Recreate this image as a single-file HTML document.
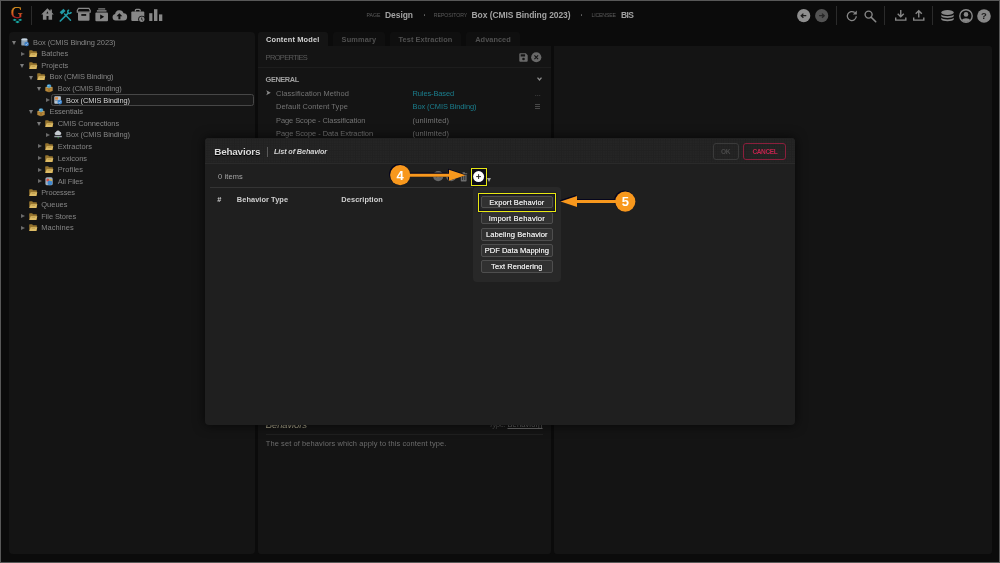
<!DOCTYPE html>
<html lang="en">
<head>
<meta charset="utf-8">
<title>Behaviors</title>
<style>
*{box-sizing:border-box;margin:0;padding:0}
html,body{width:1000px;height:563px;overflow:hidden;background:#0b0b0b}
body{font-family:"Liberation Sans",sans-serif;color:#8f8f8f;font-size:8px;position:relative}
#frame{position:absolute;left:0;top:0;width:1000px;height:563px;border:1px solid #585858;z-index:50;pointer-events:none}
.abs{position:absolute}
#root{position:absolute;left:0;top:0;width:1000px;height:563px;will-change:transform}
.panel{position:absolute;background:#141414}
#left{left:9px;top:32px;width:245.500px;height:522px;border-radius:4px}
#mid{left:258px;top:46px;width:293px;height:508px;border-radius:0 0 3px 3px}
#right{left:554.3px;top:46px;width:437.5px;height:508px;border-radius:0 3px 3px 3px}
.tab{position:absolute;top:32px;height:14px;background:#0f0f0f;border-radius:3px 3px 0 0}
.tab.on{background:#141414;height:15px}
.t{position:absolute;white-space:nowrap;line-height:12px;height:12px}
.arr{position:absolute;width:0;height:0}
.arr.d{border-left:2.4px solid transparent;border-right:2.4px solid transparent;border-top:4px solid #7c7c7c}
.arr.r{border-top:2.4px solid transparent;border-bottom:2.4px solid transparent;border-left:4px solid #6a6a6a}
svg{position:absolute;overflow:visible}
#dlg{position:absolute;left:204.5px;top:138px;width:590.5px;height:287px;background:#1f1f1f;border-radius:4px;box-shadow:0 0 11px 1px rgba(0,0,0,.6)}
#dlghead{position:absolute;left:0;top:0;width:100%;height:26px;border-radius:4px 4px 0 0;background-color:#252525;background-image:linear-gradient(#212121 1px,transparent 1px),linear-gradient(90deg,#212121 1px,transparent 1px);background-size:2.43px 2.43px;border-bottom:1px solid #2a2a2a}
.btn{position:absolute;border-radius:3px}
#menu{position:absolute;left:473px;top:187.300px;width:88px;height:94.300px;background:#282828;border-radius:4px}
.mi{position:absolute;width:72.500px;height:12.600px;border:1px solid #4e4e4e;border-radius:2px;background:#313131}
</style>
</head>
<body>
<div id="root">
<!-- top bar -->
<svg style="left:10px;top:5px" width="14" height="20" viewBox="10 5 14 20"><defs><linearGradient id="gg" gradientUnits="userSpaceOnUse" x1="0" y1="7.500" x2="0" y2="18.500"><stop offset="0" stop-color="#dc9420"/><stop offset=".45" stop-color="#d8661f"/><stop offset="1" stop-color="#c01c2c"/></linearGradient></defs><text x="10.700" y="18.400" font-family="Liberation Serif,serif" font-size="16.500" fill="url(#gg)" stroke="url(#gg)" stroke-width=".25">G</text><path d="M12.500 19.900l2.200-1.150 2.200 1.150-2.200 1.150zM18 19.900l2.150-1.150 2.150 1.150-2.150 1.150zM15.100 21.900l2.400-1.250 2.400 1.250-2.400 1.250z" fill="#17a7a2"/></svg>
<div class="abs" style="left:31px;top:6px;width:1.300px;height:19px;background:#2b2b2b"></div>
<svg style="left:41px;top:8.200px" width="13" height="12" viewBox="0 0 13 12"><path d="M6.400 0.200L0.200 6.400h1.700v5.400h3.600V7.900h2v3.900h3.600V6.400h1.700L10.900 4.500V1.500H9.300v1.500z" fill="#878787"/><path d="M6.400 3.300l1 2.300h-2z" fill="#0b0b0b"/></svg>
<svg style="left:59px;top:8.500px" width="13" height="12.500" viewBox="0 0 13 12.500"><g stroke="#219aa6" fill="none"><path d="M11.500 11.300L5.600 5" stroke-width="1.500" stroke-linecap="round"/><path d="M1.700 4.300L5.500 0.900" stroke-width="3.100"/><path d="M1.300 12L9.300 4.100" stroke-width="1.700" stroke-linecap="round"/><path d="M12.22 3.00A1.75 1.75 0 1 1 10.20 0.98" stroke-width="1.600"/></g></svg>
<svg style="left:76.700px;top:8.100px" width="13.5" height="13" viewBox="0 0 13.5 13"><path d="M1.6 0.3h10.3l1.3 2.2v1.6H0.3V2.5z" fill="none" stroke="#878787" stroke-width="1.2"/><path d="M1 4.6h11.5v7.2a.9.9 0 0 1-.9.9H1.9a.9.9 0 0 1-.9-.9z" fill="#878787"/><rect x="4.3" y="6.1" width="4.9" height="1.7" fill="#0b0b0b"/></svg>
<svg style="left:95px;top:8px" width="13.5" height="13.5" viewBox="0 0 13.5 13.5"><rect x="3.2" y="0.3" width="7" height="1.2" fill="#878787"/><rect x="1.9" y="2.2" width="9.6" height="1.4" fill="#878787"/><rect x="0.4" y="4.4" width="12.6" height="8.9" rx="1" fill="#878787"/><path d="M5.2 6.4l4 2.4-4 2.4z" fill="#0b0b0b"/></svg>
<svg style="left:112px;top:9px" width="15" height="12" viewBox="0 0 15 12"><path d="M3.6 11.6a3.3 3.3 0 0 1-.5-6.5 4.4 4.4 0 0 1 8.500-.9 3.700 3.700 0 0 1-.3 7.400z" fill="#878787"/><path d="M7.400 4.200l2.900 3.100h-1.900v3h-2v-3h-1.900z" fill="#0b0b0b"/></svg>
<svg style="left:131px;top:8.5px" width="15" height="14" viewBox="0 0 15 14"><path d="M4.400 2.600v-1.300a1 1 0 0 1 1-1h2.800a1 1 0 0 1 1 1v1.300" fill="none" stroke="#878787" stroke-width="1.300"/><rect x="0.3" y="2.600" width="13" height="9.300" rx="1" fill="#878787"/><circle cx="10.800" cy="10.300" r="3.600" fill="#0b0b0b"/><circle cx="10.800" cy="10.300" r="2.700" fill="#878787"/><path d="M10.700 8.600v1.900l1.200.8" stroke="#0b0b0b" stroke-width=".8" fill="none"/></svg>
<svg style="left:149px;top:9px" width="14" height="12" viewBox="0 0 14 12"><rect x="0.2" y="4.200" width="3.200" height="7.800" fill="#878787"/><rect x="5" y="0.2" width="3.400" height="11.800" fill="#878787"/><rect x="10" y="5.400" width="3.300" height="6.600" fill="#878787"/></svg>
<span class="t" style="left:366.60px;top:9.35px;font-size:5.20px;letter-spacing:-0.092px;color:#5c5c5c;">PAGE</span>
<span class="t" style="left:385.00px;top:9.15px;font-size:8.47px;letter-spacing:-0.038px;color:#a2a2a2;font-weight:bold;">Design</span>
<div class="abs" style="left:423.5px;top:14.3px;width:1.4px;height:1.4px;border-radius:1px;background:#666"></div>
<span class="t" style="left:433.80px;top:9.35px;font-size:5.20px;letter-spacing:-0.032px;color:#5c5c5c;">REPOSITORY</span>
<span class="t" style="left:471.50px;top:9.15px;font-size:8.47px;letter-spacing:-0.052px;color:#a2a2a2;font-weight:bold;">Box (CMIS Binding 2023)</span>
<div class="abs" style="left:581px;top:14.3px;width:1.4px;height:1.4px;border-radius:1px;background:#666"></div>
<span class="t" style="left:591.50px;top:9.35px;font-size:5.20px;letter-spacing:-0.179px;color:#5c5c5c;">LICENSEE</span>
<span class="t" style="left:621.00px;top:9.15px;font-size:8.47px;letter-spacing:-0.571px;color:#a2a2a2;font-weight:bold;">BIS</span>
<svg style="left:797px;top:8.8px" width="13.4" height="13.4" viewBox="0 0 13.4 13.4"><circle cx="6.7" cy="6.7" r="6.600" fill="#8e8e8e"/><path d="M9.300 6.700H4.400M6.400 4.600L4.200 6.700l2.200 2.100" stroke="#1c1c1c" stroke-width="1.300" fill="none"/></svg>
<svg style="left:815px;top:8.8px" width="13.4" height="13.4" viewBox="0 0 13.4 13.4"><circle cx="6.7" cy="6.7" r="6.600" fill="#535353"/><path d="M4.100 6.700h4.900M7 4.600l2.200 2.100L7 8.800" stroke="#262626" stroke-width="1.300" fill="none"/></svg>
<div class="abs" style="left:835.5px;top:6px;width:1.300px;height:19px;background:#2b2b2b"></div>
<div class="abs" style="left:884px;top:6px;width:1.300px;height:19px;background:#2b2b2b"></div>
<div class="abs" style="left:931.7px;top:6px;width:1.300px;height:19px;background:#2b2b2b"></div>
<svg style="left:846px;top:9.500px" width="12" height="12" viewBox="0 0 12 12"><path d="M10.300 6.300a4.500 4.500 0 1 1-1.600-3.700" fill="none" stroke="#878787" stroke-width="1.300"/><path d="M10.800 0.500v4h-4z" fill="#878787"/></svg>
<svg style="left:863.500px;top:9.500px" width="12.500" height="12.500" viewBox="0 0 12.500 12.500"><circle cx="4.600" cy="4.600" r="3.500" fill="none" stroke="#878787" stroke-width="1.400"/><path d="M7.200 7.200l4.500 4.500" stroke="#878787" stroke-width="1.600" stroke-linecap="round"/></svg>
<svg style="left:894.500px;top:10px" width="11.500" height="11" viewBox="0 0 11.500 11"><path d="M5.750 0v6.300M2.700 3.800l3.050 3 3.050-3" fill="none" stroke="#878787" stroke-width="1.400"/><path d="M0.700 7.400v2.700h10.100V7.400" fill="none" stroke="#878787" stroke-width="1.400"/></svg>
<svg style="left:912.500px;top:10px" width="11.500" height="11" viewBox="0 0 11.500 11"><path d="M5.750 7.500V1M2.700 3.700l3.050-3 3.050 3" fill="none" stroke="#878787" stroke-width="1.400"/><path d="M0.700 7.400v2.700h10.100V7.400" fill="none" stroke="#878787" stroke-width="1.400"/></svg>
<svg style="left:941px;top:9.800px" width="13" height="12.500" viewBox="0 0 13 12.500"><ellipse cx="6.500" cy="2.600" rx="6.200" ry="2.500" fill="#878787"/><path d="M0.300 4.400c1 2.300 11.400 2.300 12.400 0v1.800c-1 2.300-11.400 2.300-12.400 0zM0.300 7.800c1 2.300 11.400 2.300 12.400 0v1.800c-1 2.300-11.400 2.300-12.400 0z" fill="#878787"/></svg>
<svg style="left:958.500px;top:8.500px" width="14" height="14" viewBox="0 0 14 14"><circle cx="7" cy="7" r="6.200" fill="none" stroke="#878787" stroke-width="1.400"/><circle cx="7" cy="5.400" r="2.300" fill="#878787"/><path d="M2.800 11.200c.6-2.700 7.800-2.700 8.400 0a6 6 0 0 1-8.400 0z" fill="#878787"/></svg>
<svg style="left:977px;top:8.500px" width="14" height="14" viewBox="0 0 14 14"><circle cx="7" cy="7" r="6.800" fill="#878787"/><text x="7" y="10.400" text-anchor="middle" font-family="Liberation Sans,sans-serif" font-weight="bold" font-size="9.500" fill="#1a1a1a">?</text></svg>
<div class="panel" id="left"></div><div class="panel" id="mid"></div><div class="panel" id="right"></div>
<div class="tab on" style="left:257.5px;width:70.5px"></div>
<span class="t" style="left:266.00px;top:34.15px;font-size:7.40px;letter-spacing:0.166px;color:#d2d2d2;font-weight:bold;">Content Model</span>
<div class="tab" style="left:333px;width:52px"></div>
<span class="t" style="left:341.60px;top:34.15px;font-size:7.40px;letter-spacing:0.155px;color:#505050;font-weight:bold;">Summary</span>
<div class="tab" style="left:390px;width:71px"></div>
<span class="t" style="left:398.56px;top:34.15px;font-size:7.40px;letter-spacing:0.067px;color:#505050;font-weight:bold;">Test Extraction</span>
<div class="tab" style="left:466px;width:54px"></div>
<span class="t" style="left:475.27px;top:34.15px;font-size:7.40px;letter-spacing:0.014px;color:#505050;font-weight:bold;">Advanced</span>
<!-- tree -->
<div class="arr d" style="left:12.00px;top:40.80px"></div>
<svg style="left:20.50px;top:37.90px" width="8" height="8.600" viewBox="0 0 8 8.600"><rect x="0.300" y="0.600" width="6.200" height="7" rx="1.200" fill="#8fa3b5"/><ellipse cx="3.400" cy="1.500" rx="3.100" ry="1.100" fill="#c9d6e2"/><circle cx="5.600" cy="6" r="2.300" fill="#3f7fc4"/><path d="M4.600 6l.8.800 1.300-1.500" stroke="#dfe9f5" stroke-width=".6" fill="none"/></svg>
<span class="t" style="left:33.00px;top:36.55px;font-size:7.45px;letter-spacing:-0.061px;color:#868686;">Box (CMIS Binding 2023)</span>
<div class="arr r" style="left:21.35px;top:51.60px"></div>
<svg style="left:28.75px;top:50.10px" width="8.500" height="7.200" viewBox="0 0 8.500 7.200"><path d="M0.200 0.900a.6.6 0 0 1 .6-.6h2.400l.8.900h3.400a.5.5 0 0 1 .5.500v5a.4.400 0 0 1-.4.400H.6a.4.400 0 0 1-.4-.4z" fill="#94732e"/><path d="M0.300 6.900l1.400-3.700h6.700l-1.300 3.700z" fill="#dcbb66"/><path d="M2.600 4.500h3.600" stroke="#a98a3e" stroke-width=".5"/></svg>
<span class="t" style="left:41.25px;top:48.16px;font-size:7.45px;letter-spacing:-0.001px;color:#868686;">Batches</span>
<div class="arr d" style="left:20.25px;top:64.01px"></div>
<svg style="left:28.75px;top:61.71px" width="8.500" height="7.200" viewBox="0 0 8.500 7.200"><path d="M0.200 0.900a.6.6 0 0 1 .6-.6h2.400l.8.900h3.400a.5.5 0 0 1 .5.500v5a.4.400 0 0 1-.4.400H.6a.4.400 0 0 1-.4-.4z" fill="#94732e"/><path d="M0.300 6.900l1.400-3.700h6.700l-1.300 3.700z" fill="#dcbb66"/><path d="M2.600 4.500h3.600" stroke="#a98a3e" stroke-width=".5"/></svg>
<span class="t" style="left:41.25px;top:59.76px;font-size:7.45px;letter-spacing:0.027px;color:#868686;">Projects</span>
<div class="arr d" style="left:28.50px;top:75.61px"></div>
<svg style="left:37.00px;top:73.31px" width="8.500" height="7.200" viewBox="0 0 8.500 7.200"><path d="M0.200 0.900a.6.6 0 0 1 .6-.6h2.400l.8.900h3.400a.5.5 0 0 1 .5.500v5a.4.400 0 0 1-.4.400H.6a.4.400 0 0 1-.4-.4z" fill="#94732e"/><path d="M0.300 6.900l1.400-3.700h6.700l-1.300 3.700z" fill="#dcbb66"/><path d="M2.600 4.500h3.600" stroke="#a98a3e" stroke-width=".5"/></svg>
<span class="t" style="left:49.50px;top:71.36px;font-size:7.45px;letter-spacing:-0.075px;color:#868686;">Box (CMIS Binding)</span>
<div class="arr d" style="left:36.75px;top:87.22px"></div>
<svg style="left:45.25px;top:84.32px" width="8" height="8.400" viewBox="0 0 8 8.400"><path d="M0.300 3.200h7.400v3.700L4 8.300.3 6.900z" fill="#b8883a"/><path d="M0.300 3.200L4 4.600l3.700-1.400M4 4.600v3.700" stroke="#6d4d17" stroke-width=".6" fill="none"/><path d="M0.300 3.200L4 1.900l3.700 1.300L4 4.600z" fill="#d9b670"/><ellipse cx="4" cy="2.100" rx="2.300" ry="1.800" fill="#4a9ccc"/><ellipse cx="3.500" cy="1.500" rx="1" ry=".6" fill="#8cc6e6"/></svg>
<span class="t" style="left:57.75px;top:82.97px;font-size:7.45px;letter-spacing:-0.075px;color:#868686;">Box (CMIS Binding)</span>
<div class="arr r" style="left:46.10px;top:98.03px"></div>
<div class="abs" style="left:51px;top:94.22px;width:203.300px;height:11.800px;border:1px solid #474747;border-radius:2.500px;background:#191919"></div>
<svg style="left:53.50px;top:95.92px" width="8.400" height="8.600" viewBox="0 0 8.400 8.600"><rect x="0.300" y="0.300" width="6.600" height="7.400" rx=".8" fill="#b9c6d2"/><rect x="1.100" y="1.200" width="3" height="2.400" fill="#d9843a"/><rect x="1.100" y="4.300" width="4.800" height=".8" fill="#6f8296"/><circle cx="5.800" cy="6.100" r="2.400" fill="#3d86cf"/><path d="M4.700 6.100l.8.800 1.400-1.600" stroke="#e6f0fa" stroke-width=".6" fill="none"/></svg>
<span class="t" style="left:66.00px;top:94.58px;font-size:7.45px;letter-spacing:-0.075px;color:#dedede;text-shadow:0 0 1px #000,0 0 1px #000;">Box (CMIS Binding)</span>
<div class="arr d" style="left:28.50px;top:110.43px"></div>
<svg style="left:37.00px;top:107.53px" width="8" height="8.400" viewBox="0 0 8 8.400"><path d="M0.300 3.200h7.400v3.700L4 8.300.3 6.900z" fill="#b8883a"/><path d="M0.300 3.200L4 4.600l3.700-1.400M4 4.600v3.700" stroke="#6d4d17" stroke-width=".6" fill="none"/><path d="M0.300 3.200L4 1.900l3.700 1.300L4 4.600z" fill="#d9b670"/><ellipse cx="4" cy="2.100" rx="2.300" ry="1.800" fill="#4a9ccc"/><ellipse cx="3.500" cy="1.500" rx="1" ry=".6" fill="#8cc6e6"/></svg>
<span class="t" style="left:49.50px;top:106.18px;font-size:7.45px;letter-spacing:-0.052px;color:#868686;">Essentials</span>
<div class="arr d" style="left:36.75px;top:122.04px"></div>
<svg style="left:45.25px;top:119.74px" width="8.500" height="7.200" viewBox="0 0 8.500 7.200"><path d="M0.200 0.900a.6.6 0 0 1 .6-.6h2.400l.8.900h3.400a.5.5 0 0 1 .5.500v5a.4.400 0 0 1-.4.400H.6a.4.400 0 0 1-.4-.4z" fill="#94732e"/><path d="M0.300 6.900l1.400-3.700h6.700l-1.300 3.700z" fill="#dcbb66"/><path d="M2.600 4.500h3.600" stroke="#a98a3e" stroke-width=".5"/></svg>
<span class="t" style="left:57.75px;top:117.79px;font-size:7.45px;letter-spacing:-0.038px;color:#868686;">CMIS Connections</span>
<div class="arr r" style="left:46.10px;top:132.84px"></div>
<svg style="left:53.50px;top:130.94px" width="8.400" height="8.400" viewBox="0 0 8.400 8.400"><path d="M1.600 3.900a1.500 1.500 0 0 1 .3-2.900 2.100 2.100 0 0 1 4-.2 1.600 1.600 0 0 1 .3 3.100z" fill="#c4c9cf"/><rect x="0.300" y="4.700" width="7.600" height="1.500" rx=".5" fill="#9aa2ab"/><rect x="3.700" y="6.200" width="1" height="1.200" fill="#3fae4a"/></svg>
<span class="t" style="left:66.00px;top:129.39px;font-size:7.45px;letter-spacing:-0.075px;color:#868686;">Box (CMIS Binding)</span>
<div class="arr r" style="left:37.85px;top:144.45px"></div>
<svg style="left:45.25px;top:142.95px" width="8.500" height="7.200" viewBox="0 0 8.500 7.200"><path d="M0.200 0.900a.6.6 0 0 1 .6-.6h2.400l.8.900h3.400a.5.5 0 0 1 .5.500v5a.4.400 0 0 1-.4.400H.6a.4.400 0 0 1-.4-.4z" fill="#94732e"/><path d="M0.300 6.900l1.400-3.700h6.700l-1.300 3.700z" fill="#dcbb66"/><path d="M2.600 4.500h3.600" stroke="#a98a3e" stroke-width=".5"/></svg>
<span class="t" style="left:57.75px;top:141.00px;font-size:7.45px;letter-spacing:0.076px;color:#868686;">Extractors</span>
<div class="arr r" style="left:37.85px;top:156.05px"></div>
<svg style="left:45.25px;top:154.55px" width="8.500" height="7.200" viewBox="0 0 8.500 7.200"><path d="M0.200 0.900a.6.6 0 0 1 .6-.6h2.400l.8.900h3.400a.5.5 0 0 1 .5.500v5a.4.400 0 0 1-.4.400H.6a.4.400 0 0 1-.4-.4z" fill="#94732e"/><path d="M0.300 6.900l1.400-3.700h6.700l-1.300 3.700z" fill="#dcbb66"/><path d="M2.600 4.500h3.600" stroke="#a98a3e" stroke-width=".5"/></svg>
<span class="t" style="left:57.75px;top:152.60px;font-size:7.45px;letter-spacing:-0.016px;color:#868686;">Lexicons</span>
<div class="arr r" style="left:37.85px;top:167.66px"></div>
<svg style="left:45.25px;top:166.16px" width="8.500" height="7.200" viewBox="0 0 8.500 7.200"><path d="M0.200 0.900a.6.6 0 0 1 .6-.6h2.400l.8.900h3.400a.5.5 0 0 1 .5.500v5a.4.400 0 0 1-.4.400H.6a.4.400 0 0 1-.4-.4z" fill="#94732e"/><path d="M0.300 6.900l1.400-3.700h6.700l-1.300 3.700z" fill="#dcbb66"/><path d="M2.600 4.500h3.600" stroke="#a98a3e" stroke-width=".5"/></svg>
<span class="t" style="left:57.75px;top:164.20px;font-size:7.45px;letter-spacing:0.069px;color:#868686;">Profiles</span>
<div class="arr r" style="left:37.85px;top:179.26px"></div>
<svg style="left:45.25px;top:177.06px" width="8.600" height="8.800" viewBox="0 0 8.600 8.800"><rect x="0.400" y="0.300" width="7.300" height="8" rx="1.600" fill="#9fb0c0"/><circle cx="2.800" cy="2.900" r="1.500" fill="#d2504a"/><circle cx="5.500" cy="3.300" r="1.400" fill="#e0b040"/><circle cx="4.900" cy="5.900" r="2.400" fill="#3f88d0"/></svg>
<span class="t" style="left:57.75px;top:175.81px;font-size:7.45px;letter-spacing:-0.091px;color:#868686;">All Files</span>
<svg style="left:28.75px;top:189.37px" width="8.500" height="7.200" viewBox="0 0 8.500 7.200"><path d="M0.200 0.900a.6.6 0 0 1 .6-.6h2.400l.8.900h3.400a.5.5 0 0 1 .5.500v5a.4.400 0 0 1-.4.400H.6a.4.400 0 0 1-.4-.4z" fill="#94732e"/><path d="M0.300 6.900l1.400-3.700h6.700l-1.300 3.700z" fill="#dcbb66"/><path d="M2.600 4.500h3.600" stroke="#a98a3e" stroke-width=".5"/></svg>
<span class="t" style="left:41.25px;top:187.41px;font-size:7.45px;letter-spacing:-0.112px;color:#868686;">Processes</span>
<svg style="left:28.75px;top:200.97px" width="8.500" height="7.200" viewBox="0 0 8.500 7.200"><path d="M0.200 0.900a.6.6 0 0 1 .6-.6h2.400l.8.900h3.400a.5.5 0 0 1 .5.500v5a.4.400 0 0 1-.4.400H.6a.4.400 0 0 1-.4-.4z" fill="#94732e"/><path d="M0.300 6.900l1.400-3.700h6.700l-1.300 3.700z" fill="#dcbb66"/><path d="M2.600 4.500h3.600" stroke="#a98a3e" stroke-width=".5"/></svg>
<span class="t" style="left:41.25px;top:199.02px;font-size:7.45px;letter-spacing:0.040px;color:#868686;">Queues</span>
<div class="arr r" style="left:21.35px;top:214.08px"></div>
<svg style="left:28.75px;top:212.58px" width="8.500" height="7.200" viewBox="0 0 8.500 7.200"><path d="M0.200 0.900a.6.6 0 0 1 .6-.6h2.400l.8.900h3.400a.5.5 0 0 1 .5.500v5a.4.400 0 0 1-.4.400H.6a.4.400 0 0 1-.4-.4z" fill="#94732e"/><path d="M0.300 6.900l1.400-3.700h6.700l-1.300 3.700z" fill="#dcbb66"/><path d="M2.600 4.500h3.600" stroke="#a98a3e" stroke-width=".5"/></svg>
<span class="t" style="left:41.25px;top:210.62px;font-size:7.45px;letter-spacing:-0.066px;color:#868686;">File Stores</span>
<div class="arr r" style="left:21.35px;top:225.68px"></div>
<svg style="left:28.75px;top:224.18px" width="8.500" height="7.200" viewBox="0 0 8.500 7.200"><path d="M0.200 0.900a.6.6 0 0 1 .6-.6h2.400l.8.900h3.400a.5.5 0 0 1 .5.500v5a.4.400 0 0 1-.4.400H.6a.4.400 0 0 1-.4-.4z" fill="#94732e"/><path d="M0.300 6.900l1.400-3.700h6.700l-1.300 3.700z" fill="#dcbb66"/><path d="M2.600 4.500h3.600" stroke="#a98a3e" stroke-width=".5"/></svg>
<span class="t" style="left:41.25px;top:222.23px;font-size:7.45px;letter-spacing:0.080px;color:#868686;">Machines</span>
<!-- properties -->
<span class="t" style="left:265.60px;top:52.05px;font-size:7.50px;letter-spacing:-0.661px;color:#5a5a5a;">PROPERTIES</span>
<svg style="left:519px;top:52.500px" width="9" height="9" viewBox="0 0 9 9"><path d="M0.300 1.200a.9.900 0 0 1 .9-.9h5.600l1.900 1.900v5.600a.9.900 0 0 1-.9.900H1.200a.9.900 0 0 1-.9-.9z" fill="#696969"/><rect x="1.700" y="1.300" width="4.400" height="2.200" fill="#141414"/><circle cx="4.500" cy="6" r="1.300" fill="#141414"/></svg>
<svg style="left:531px;top:52px" width="10.500" height="10.500" viewBox="0 0 10.500 10.500"><circle cx="5.250" cy="5.250" r="5.100" fill="#696969"/><path d="M3.400 3.400l3.700 3.700M7.100 3.400L3.400 7.100" stroke="#141414" stroke-width="1.100"/></svg>
<div class="abs" style="left:258px;top:66.500px;width:293px;height:1px;background:#1d1d1d"></div>
<span class="t" style="left:265.60px;top:73.95px;font-size:7.40px;letter-spacing:-0.430px;color:#a0a0a0;font-weight:bold;">GENERAL</span>
<svg style="left:536.500px;top:77px" width="5" height="4" viewBox="0 0 5 4"><path d="M0.500 0.600l2 2.400 2-2.400" fill="none" stroke="#8c8c8c" stroke-width="1.300"/></svg>
<svg style="left:266px;top:90.300px" width="5" height="5.400" viewBox="0 0 5 5.400"><path d="M0.200 0.200L4.800 2.700.2 5.200l1.200-2.500z" fill="#8a8a8a"/></svg>
<span class="t" style="left:276.00px;top:87.85px;font-size:7.45px;letter-spacing:0.107px;color:#747474;">Classification Method</span>
<span class="t" style="left:412.50px;top:87.85px;font-size:7.45px;letter-spacing:-0.093px;color:#1b7f8e;">Rules-Based</span>
<span class="t" style="left:276.00px;top:101.35px;font-size:7.45px;letter-spacing:0.110px;color:#747474;">Default Content Type</span>
<span class="t" style="left:412.50px;top:101.35px;font-size:7.45px;letter-spacing:-0.075px;color:#1b7f8e;">Box (CMIS Binding)</span>
<span class="t" style="left:276.00px;top:114.85px;font-size:7.45px;letter-spacing:-0.056px;color:#747474;">Page Scope - Classification</span>
<span class="t" style="left:412.50px;top:114.85px;font-size:7.45px;letter-spacing:0.182px;color:#747474;">(unlimited)</span>
<span class="t" style="left:276.00px;top:128.35px;font-size:7.45px;letter-spacing:-0.035px;color:#747474;">Page Scope - Data Extraction</span>
<span class="t" style="left:412.50px;top:128.35px;font-size:7.45px;letter-spacing:0.182px;color:#747474;">(unlimited)</span>
<span class="t" style="left:534.80px;top:87.95px;font-size:7.45px;letter-spacing:-0.126px;color:#5a5a5a;">...</span>
<svg style="left:534.800px;top:104.300px" width="5" height="5" viewBox="0 0 5 5"><path d="M0 0.500h5M0 2.500h5M0 4.500h5" stroke="#555" stroke-width=".8"/></svg>
<span class="t" style="left:265.80px;top:418.75px;font-size:9.49px;letter-spacing:-0.131px;color:#b0aa90;font-style:italic;">Behaviors</span>
<span class="t" style="left:489.00px;top:419.25px;font-size:7.45px;letter-spacing:-0.310px;color:#555;font-style:italic;">Type:</span>
<span class="t" style="left:507.50px;top:419.25px;font-size:7.45px;letter-spacing:0.154px;color:#6a6a6a;text-decoration:underline;">Behavior[]</span>
<div class="abs" style="left:266px;top:434px;width:277px;height:1px;background:#1f1f1f"></div>
<span class="t" style="left:265.80px;top:438.05px;font-size:7.45px;letter-spacing:0.108px;color:#6c6c6c;">The set of behaviors which apply to this content type.</span>
<!-- dialog -->
<div id="dlg"><div id="dlghead"></div></div>
<span class="t" style="left:214.30px;top:145.95px;font-size:9.90px;letter-spacing:-0.208px;color:#dadada;font-weight:bold;text-shadow:0 0.5px 1px #000;">Behaviors</span>
<div class="abs" style="left:267px;top:146.500px;width:1px;height:10.500px;background:#5a5a5a"></div>
<span class="t" style="left:274.00px;top:146.25px;font-size:7.30px;letter-spacing:-0.135px;color:#d4d4d4;font-weight:bold;font-style:italic;">List of Behavior</span>
<div class="btn" style="left:712.600px;top:143px;width:26.800px;height:16.500px;border:1px solid #3a3a3a;"></div>
<span class="t" style="left:720.90px;top:145.85px;font-size:6.53px;letter-spacing:-0.224px;color:#4a4a4a;font-weight:bold;">OK</span>
<div class="btn" style="left:743.400px;top:143px;width:42.800px;height:16.500px;border:1px solid #8a1f3c;"></div>
<span class="t" style="left:752.40px;top:145.85px;font-size:6.53px;letter-spacing:-0.371px;color:#c2244e;font-weight:bold;">CANCEL</span>
<span class="t" style="left:218.00px;top:171.05px;font-size:7.45px;letter-spacing:0.123px;color:#a6a6a6;">0 items</span>
<svg style="left:432.700px;top:171.400px" width="10.400" height="10.400" viewBox="0 0 10.400 10.400"><circle cx="5.200" cy="5.200" r="5.100" fill="#666"/><path d="M2.900 6.100l2.300-2.300 2.300 2.300" stroke="#2a2a2a" stroke-width="1.200" fill="none"/></svg>
<svg style="left:445.800px;top:171.400px" width="10.400" height="10.400" viewBox="0 0 10.400 10.400"><circle cx="5.200" cy="5.200" r="5.100" fill="#666"/><path d="M2.900 4.300l2.300 2.300 2.300-2.300" stroke="#2a2a2a" stroke-width="1.200" fill="none"/></svg>
<svg style="left:460.400px;top:171.800px" width="7.400" height="9.600" viewBox="0 0 7.400 9.600"><path d="M0.200 1.300h7v1H.2zM2.500 0.300h2.400v1H2.500zM0.800 2.900h5.800v5.800a.7.700 0 0 1-.7.700H1.500a.7.700 0 0 1-.7-.7z" fill="#6c6c6c"/><path d="M2.600 4v4M4.800 4v4" stroke="#2a2a2a" stroke-width=".9"/></svg>
<div class="abs" style="left:210px;top:186.700px;width:263px;height:1px;background:#343434"></div>
<span class="t" style="left:217.30px;top:193.95px;font-size:7.40px;letter-spacing:0.571px;color:#d0d0d0;font-weight:bold;">#</span>
<span class="t" style="left:236.80px;top:193.95px;font-size:7.40px;letter-spacing:0.072px;color:#d0d0d0;font-weight:bold;">Behavior Type</span>
<span class="t" style="left:341.30px;top:193.95px;font-size:7.40px;letter-spacing:0.092px;color:#d0d0d0;font-weight:bold;">Description</span>
<div class="abs" style="left:471px;top:167.800px;width:16.200px;height:17.800px;border:1.400px solid #e6e614;background:#0c0c16;box-shadow:0 0 1.500px 0.500px #05051a"></div>
<svg style="left:473.400px;top:171.200px" width="11.200" height="11.200" viewBox="0 0 11.200 11.200"><circle cx="5.600" cy="5.600" r="5.500" fill="#fff"/><path d="M5.600 3.200v4.800M3.200 5.600h4.800" stroke="#222" stroke-width=".95"/></svg>
<svg style="left:487.200px;top:178.200px" width="4" height="4" viewBox="0 0 4 4"><path d="M0 0h4L2 4z" fill="#a0a0a0"/></svg>
<div id="menu"></div>
<div class="mi" style="left:480.500px;top:195.80px"></div>
<span class="t" style="left:489.19px;top:196.85px;font-size:7.55px;letter-spacing:0.102px;color:#e6e6e6;text-shadow:0 0 .5px #e6e6e6,0 0 1px #111;">Export Behavior</span>
<div class="mi" style="left:480.500px;top:211.90px"></div>
<span class="t" style="left:488.71px;top:212.95px;font-size:7.55px;letter-spacing:0.193px;color:#e6e6e6;text-shadow:0 0 .5px #e6e6e6,0 0 1px #111;">Import Behavior</span>
<div class="mi" style="left:480.500px;top:228.00px"></div>
<span class="t" style="left:486.01px;top:229.05px;font-size:7.55px;letter-spacing:0.068px;color:#e6e6e6;text-shadow:0 0 .5px #e6e6e6,0 0 1px #111;">Labeling Behavior</span>
<div class="mi" style="left:480.500px;top:244.10px"></div>
<span class="t" style="left:484.76px;top:245.15px;font-size:7.55px;letter-spacing:-0.006px;color:#e6e6e6;text-shadow:0 0 .5px #e6e6e6,0 0 1px #111;">PDF Data Mapping</span>
<div class="mi" style="left:480.500px;top:260.20px"></div>
<span class="t" style="left:491.08px;top:261.25px;font-size:7.55px;letter-spacing:0.048px;color:#e6e6e6;text-shadow:0 0 .5px #e6e6e6,0 0 1px #111;">Text Rendering</span>
<div class="abs" style="left:477.800px;top:192.700px;width:78.500px;height:19.100px;border:1.500px solid #e8e812;box-shadow:0 0 1.500px 0.500px #05051a, inset 0 0 1.500px 0.500px #05051a"></div>
<!-- callouts -->
<svg style="left:385px;top:160px;filter:drop-shadow(0.300px 0.500px 0.450px #05051c) drop-shadow(-0.200px -0.200px 0.350px #05051c)" width="90" height="32" viewBox="385 160 90 32"><path d="M400 173.700h49v-4l16.600 5.500L449 180.700V176.700h-49z" fill="#f8981d"/><circle cx="400.200" cy="175.100" r="10.100" fill="#f8981d"/><text x="400.200" y="179.800" text-anchor="middle" font-family="Liberation Sans,sans-serif" font-weight="bold" font-size="13" fill="#fff">4</text></svg>
<svg style="left:555px;top:186px;filter:drop-shadow(0.300px 0.500px 0.450px #05051c) drop-shadow(-0.200px -0.200px 0.350px #05051c)" width="90" height="32" viewBox="555 186 90 32"><path d="M625 200.100h-48v-4l-16.500 5.500L577 207.100v-4h48z" fill="#f8981d"/><circle cx="625.300" cy="201.600" r="10.100" fill="#f8981d"/><text x="625.300" y="206.300" text-anchor="middle" font-family="Liberation Sans,sans-serif" font-weight="bold" font-size="13" fill="#fff">5</text></svg>
</div>
<div id="frame"></div>
</body>
</html>
